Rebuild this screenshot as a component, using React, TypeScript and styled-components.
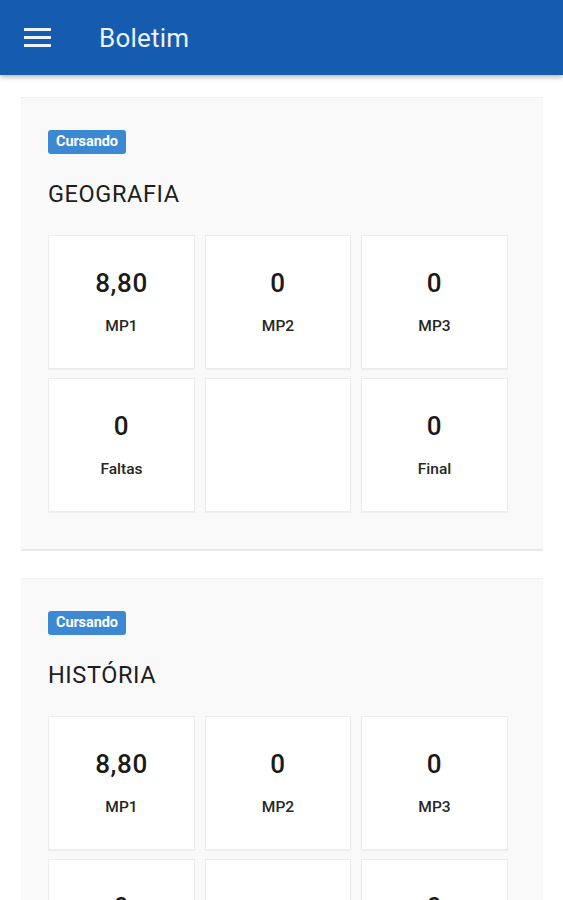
import React from 'react';
import styled, { createGlobalStyle } from 'styled-components';

const GlobalStyle = createGlobalStyle`
  body {
    margin: 0;
    background: #ffffff;
    font-family: Roboto, "Noto Sans", sans-serif;
  }
`;

const Page = styled.div`
  width: 563px;
  height: 900px;
  overflow: hidden;
`;

const Header = styled.header`
  height: 75px;
  background-color: #155cb0;
  display: flex;
  align-items: center;
  padding-left: 24px;
  box-shadow: 0 2px 5px rgba(0, 0, 0, 0.3);
  position: relative;
  z-index: 1;
`;

const MenuButton = styled.div`
  width: 28px;
  height: 22px;
  display: flex;
  margin-top: 2px;
`;

const Title = styled.h1`
  margin: 0 0 0 47px;
  color: #eef2f9;
  font-size: 26px;
  font-weight: 400;
  letter-spacing: 0.2px;
`;

const Content = styled.div`
  padding: 22px 20px 0 21px;
  display: flex;
  flex-direction: column;
  gap: 27px;
`;

const Card = styled.section`
  background-color: #f9f9f9;
  border-top: 1px solid #f0f0f0;
  border-bottom: 2px solid #e8e8e8;
  padding: 32px 35px 37px 27px;
`;

const Badge = styled.span`
  display: inline-block;
  background-color: #3c88d3;
  color: #fff;
  font-size: 14.5px;
  font-weight: 700;
  line-height: 24px;
  height: 24px;
  padding: 0 8px;
  border-radius: 3px;
  letter-spacing: -0.1px;
`;

const Subject = styled.h2`
  margin: 26px 0 27px;
  font-size: 23.5px;
  font-weight: 400;
  color: #1d1d1d;
  letter-spacing: 0.6px;
  line-height: 28px;
`;

const Grid = styled.div`
  display: grid;
  grid-template-columns: 147px 146px 147px;
  column-gap: 10px;
  row-gap: 9px;
`;

const Cell = styled.div`
  height: 134px;
  box-sizing: border-box;
  background: #fff;
  border: 1px solid #ececec;
  box-shadow: 0 1px 1px rgba(0, 0, 0, 0.04);
  display: flex;
  flex-direction: column;
  align-items: center;
  padding-top: 31px;
`;

const Value = styled.div`
  font-size: 26px;
  font-weight: 500;
  color: #1a1a1a;
  line-height: 32px;
  letter-spacing: 0.6px;
`;

const Label = styled.div`
  margin-top: 18px;
  font-size: 15.5px;
  font-weight: 500;
  color: #262626;
  line-height: 18px;
`;

type Grade = { value?: string; label?: string };

type Subj = { name: string; grades: Grade[] };

const subjects: Subj[] = [
  {
    name: 'GEOGRAFIA',
    grades: [
      { value: '8,80', label: 'MP1' },
      { value: '0', label: 'MP2' },
      { value: '0', label: 'MP3' },
      { value: '0', label: 'Faltas' },
      {},
      { value: '0', label: 'Final' },
    ],
  },
  {
    name: 'HISTÓRIA',
    grades: [
      { value: '8,80', label: 'MP1' },
      { value: '0', label: 'MP2' },
      { value: '0', label: 'MP3' },
      { value: '0', label: 'Faltas' },
      {},
      { value: '0', label: 'Final' },
    ],
  },
];

const MenuIcon = () => (
  <svg width="28" height="22" viewBox="0 0 28 22">
    <rect x="0" y="0" width="27" height="3" fill="#eef2f9" />
    <rect x="0" y="8" width="27" height="3" fill="#eef2f9" />
    <rect x="0" y="16" width="27" height="3" fill="#eef2f9" />
  </svg>
);

const App = () => {
  return (
    <Page>
      <GlobalStyle />
      <Header>
        <MenuButton>
          <MenuIcon />
        </MenuButton>
        <Title>Boletim</Title>
      </Header>
      <Content>
        {subjects.map((s) => (
          <Card key={s.name}>
            <Badge>Cursando</Badge>
            <Subject>{s.name}</Subject>
            <Grid>
              {s.grades.map((g, i) => (
                <Cell key={i}>
                  {g.value && <Value>{g.value}</Value>}
                  {g.label && <Label>{g.label}</Label>}
                </Cell>
              ))}
            </Grid>
          </Card>
        ))}
      </Content>
    </Page>
  );
};

export default App;
